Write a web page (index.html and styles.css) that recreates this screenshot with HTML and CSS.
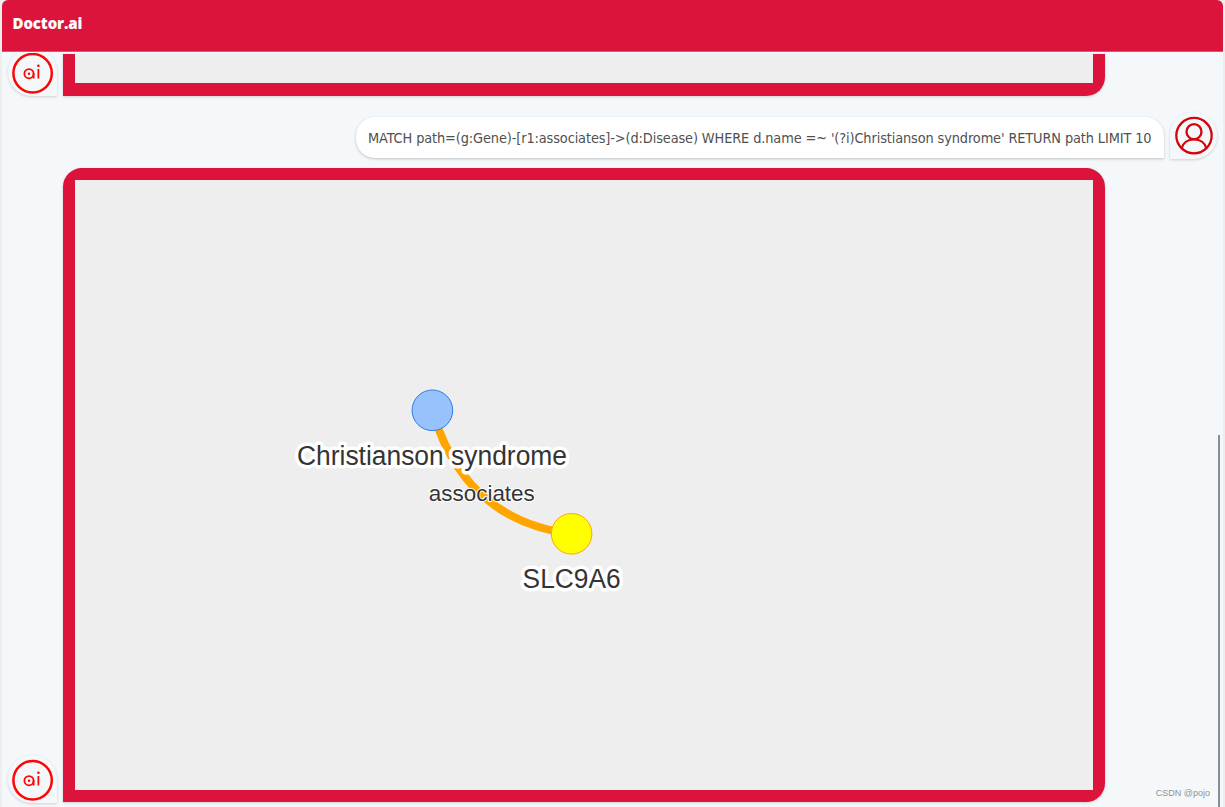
FILE: index.html
```html
<!DOCTYPE html>
<html lang="en">
<head>
<meta charset="utf-8">
<title>Doctor.ai</title>
<link rel="stylesheet" href="styles.css">
</head>
<body>
<div class="chat">
  <header class="chat-header">Doctor.ai</header>
  <main class="chat-body">
    <section class="row row-bot row-first">
      <div class="avatar avatar-bot">
        <svg width="49" height="48" viewBox="0 0 49 48" fill="none" stroke="#ff0505">
          <circle cx="24.6" cy="25.2" r="19.2" stroke-width="2.5"/>
          <circle cx="21" cy="25.7" r="4.6" stroke-width="1.8"/>
          <circle cx="21" cy="25.7" r="1.2" fill="#ff0505" stroke="none"/>
          <path d="M25.600 25.500v5M30.400 21v9.500" stroke-width="1.8"/>
          <circle cx="30.4" cy="17.800" r="1.300" fill="#ff0505" stroke="none"/>
        </svg>
      </div>
      <div class="panel panel-cut"></div>
    </section>
    <section class="row row-user">
      <div class="bubble"><span class="query">MATCH path=(g:Gene)-[r1:associates]-&gt;(d:Disease) WHERE d.name =~ '(?i)Christianson syndrome' RETURN path LIMIT 10</span></div>
      <div class="avatar avatar-user">
        <svg width="47" height="47" viewBox="0 0 47 47" fill="none" stroke="#d40408" stroke-width="2.3">
          <circle cx="24" cy="23.6" r="17.700"/>
          <circle cx="24" cy="19.700" r="7.500"/>
          <path d="M11.700 36.200C13 31 17.500 27.400 24 27.400S35 31 36.300 36.200"/>
        </svg>
      </div>
    </section>
    <section class="row row-bot">
      <div class="avatar avatar-bot">
        <svg width="49" height="48" viewBox="0 0 49 48" fill="none" stroke="#ff0505">
          <circle cx="24.6" cy="25.2" r="19.2" stroke-width="2.5"/>
          <circle cx="21" cy="25.7" r="4.6" stroke-width="1.8"/>
          <circle cx="21" cy="25.7" r="1.2" fill="#ff0505" stroke="none"/>
          <path d="M25.600 25.500v5M30.400 21v9.500" stroke-width="1.8"/>
          <circle cx="30.4" cy="17.800" r="1.300" fill="#ff0505" stroke="none"/>
        </svg>
      </div>
      <div class="panel">
        <svg class="graph" viewBox="75 180 1018 610">
          <path class="edge" d="M432.400 410.500Q464 520 571.500 534"/>
          <text class="edge-label" x="481.800" y="501" textLength="106" lengthAdjust="spacingAndGlyphs">associates</text>
          <circle class="node-disease" cx="432.400" cy="410.300" r="20.300"/>
          <circle class="node-gene" cx="571.600" cy="533.800" r="20.300"/>
          <text class="node-label" x="432" y="464.500" textLength="270" lengthAdjust="spacingAndGlyphs">Christianson syndrome</text>
          <text class="node-label" x="571.600" y="588" textLength="98" lengthAdjust="spacingAndGlyphs">SLC9A6</text>
        </svg>
      </div>
    </section>
  </main>
  <div class="scroll-thumb"></div>
  <div class="watermark">CSDN @pojo</div>
</div>
</body>
</html>
```
FILE: styles.css
```css
* { box-sizing: border-box; }

body {
  margin: 0;
  height: 807px;
  overflow: hidden;
  background: #eee;
  font-family: "DejaVu Sans", "Noto Sans", sans-serif;
}

.chat {
  position: relative;
  display: flex;
  flex-direction: column;
  width: 1221px;
  height: 807px;
  margin-left: 2px;
  background: #f4f8fb;
  border-radius: 6px 6px 0 0;
  overflow: hidden;
}

.chat-header {
  flex: none;
  height: 52px;
  padding: 0 10.5px;
  background: #dc143c;
  border-bottom: 1px solid #e8506e;
  color: #fff;
  font: 800 15px/47px "Open Sans", sans-serif;
  letter-spacing: -.1px;
}

.chat-body {
  flex: 1;
  display: flex;
  flex-direction: column;
  min-height: 0;
  margin-top: 2px;
}

.row {
  display: flex;
  flex: none;
  align-items: flex-end;
  gap: 6px;
  padding-left: 6px;
}

.row-first {
  height: 42px;
  clip-path: inset(-1px -10px -8px -10px);
}

.row-first .avatar { margin-bottom: 0; }

.row-user {
  justify-content: flex-end;
  margin: 16px 0 9px;
  padding-right: 6px;
}

.avatar {
  flex: none;
  background: #f4f8fb;
  box-shadow: 0 1px 3px rgba(0, 0, 0, .16);
}

.avatar svg { display: block; }

.avatar-bot {
  width: 49px;
  height: 48px;
  margin-bottom: -1px;
  border-radius: 24px 24px 0 24px;
}

.avatar-user {
  width: 47px;
  height: 47px;
  border-radius: 24px 24px 24px 0;
}

.panel {
  width: 1042px;
  height: 634px;
  border: 12px solid #dc143c;
  border-radius: 19px 19px 19px 0;
  background: #dc143c;
  box-shadow: 0 1px 3px rgba(0, 0, 0, .16);
}

.panel-cut {
  height: 42px;
  border-top: 0;
  border-radius: 0 0 19px 0;
}

.panel-cut::before {
  content: "";
  display: block;
  height: 29px;
  background: #eee;
}

.graph {
  display: block;
  width: 1018px;
  height: 610px;
  background: #eee;
  font-family: "Liberation Sans", Arial, sans-serif;
}

.edge { fill: none; stroke: orange; stroke-width: 8; }
.node-disease { fill: #97c2fc; stroke: #2b7ce9; stroke-width: 1; }
.node-gene { fill: #ff0; stroke: orange; stroke-width: 1; }

.node-label,
.edge-label {
  fill: #343434;
  stroke: #fff;
  stroke-linejoin: round;
  paint-order: stroke;
  text-anchor: middle;
}

.node-label { font-size: 27px; stroke-width: 7px; }
.edge-label { font-size: 22.5px; stroke-width: 2px; }

.bubble {
  display: flex;
  align-items: center;
  width: 808px;
  height: 41px;
  margin-bottom: 1px;
  padding-left: 12px;
  background: #fff;
  border-radius: 19px 19px 0 19px;
  box-shadow: 0 1px 3px rgba(0, 0, 0, .22);
}

.query {
  color: #505050;
  font-size: 14.4px;
  font-stretch: condensed;
  letter-spacing: -.12px;
  white-space: nowrap;
}

.scroll-thumb {
  position: absolute;
  top: 435px;
  right: 3px;
  bottom: 0;
  width: 2px;
  background: #8b8d8f;
}

.watermark {
  position: absolute;
  right: 13px;
  bottom: 8px;
  color: #909294;
  font: 9px/12px "Liberation Sans", sans-serif;
}
```
